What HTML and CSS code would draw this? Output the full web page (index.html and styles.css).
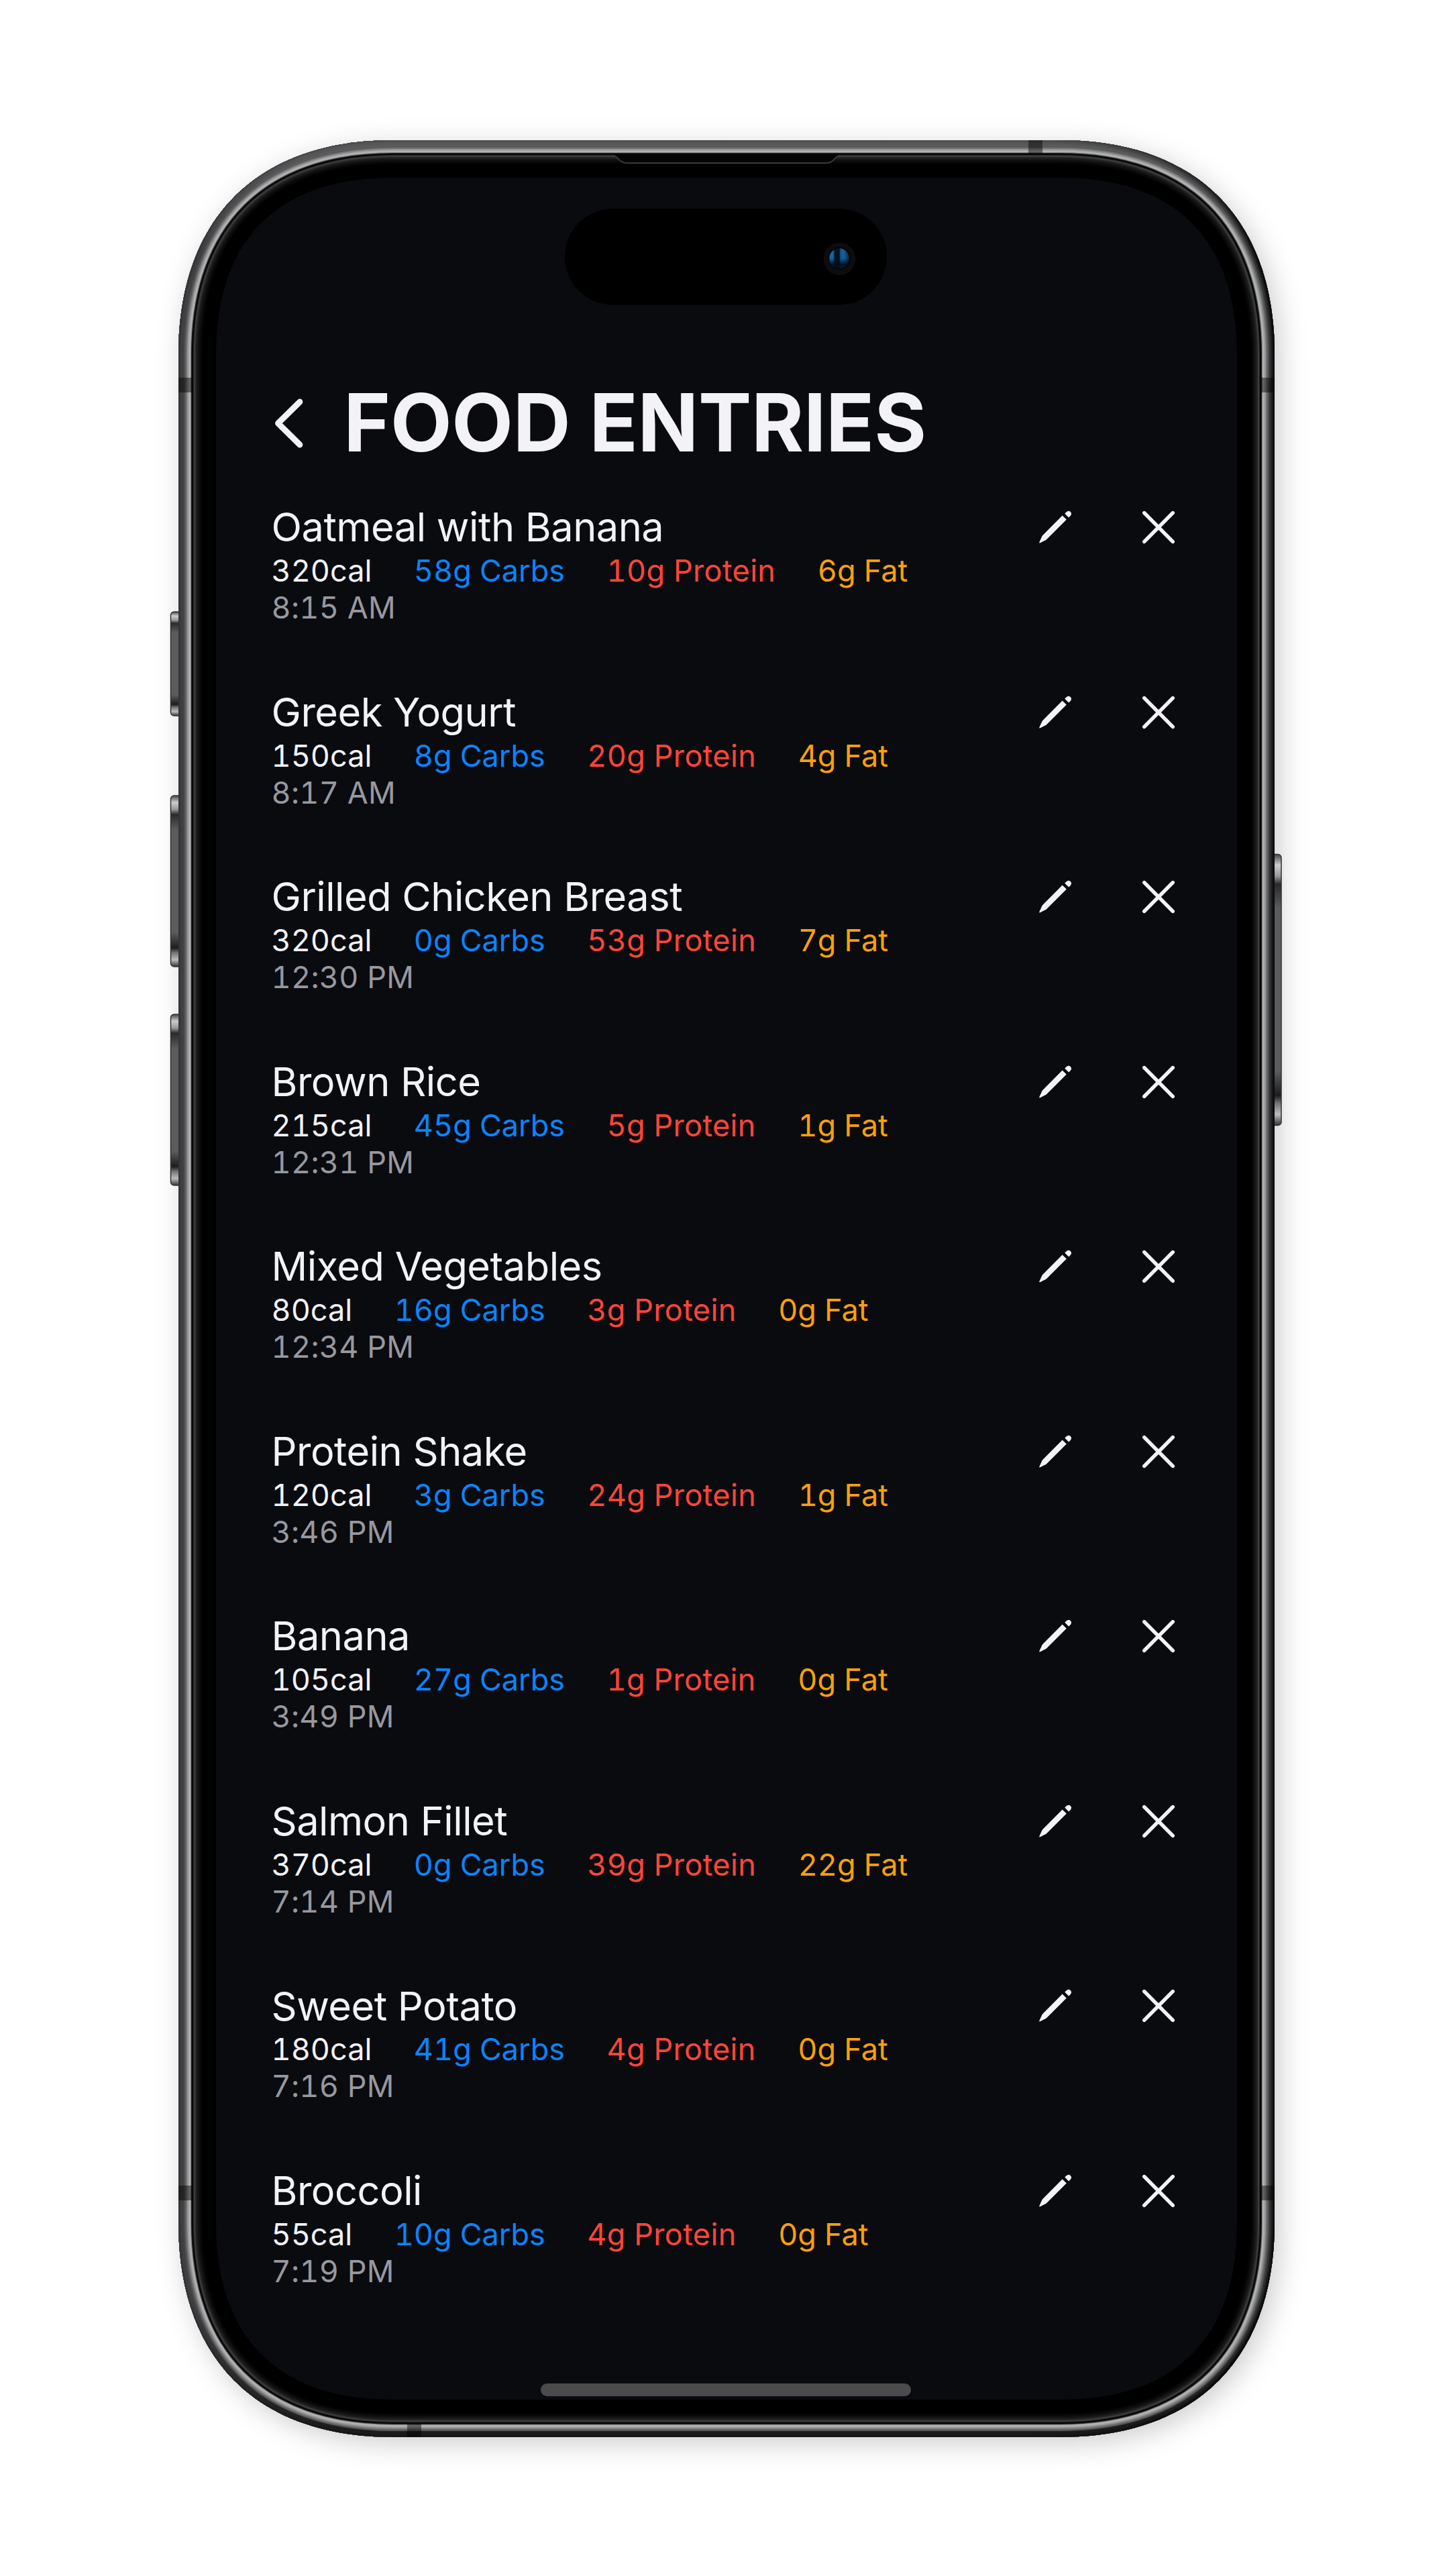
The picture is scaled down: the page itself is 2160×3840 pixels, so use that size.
FILE: index.html
```html
<!DOCTYPE html>
<html lang="en">
<head>
<meta charset="utf-8">
<title>Food Entries</title>
<link rel="stylesheet" href="styles.css">
</head>
<body>
<svg class="defs" aria-hidden="true">
  <symbol id="icon-pencil" viewBox="0 0 50 50"><path d="M35.6 7.6 41.8 13.4 12.8 42.5Q11.3 44 9 45L2.6 48.2Q.7 48.9 1.4 47L4.4 40.4Q5.2 38.2 6.8 36.6Z"/><path d="M39.2 4.6 42.3 1.7Q45.2-.4 47.7 1.9Q50.2 4.6 48.1 7.4L45.1 10.4Z"/></symbol>
  <symbol id="icon-close" viewBox="0 0 50 50"><path d="M3.8 3.6 46.2 46.4M46.2 3.6 3.8 46.4" fill="none" stroke="currentColor" stroke-width="5.6" stroke-linecap="round"/></symbol>
</svg>
<main class="device">
  <svg class="frame" viewBox="0 0 1634 3424" aria-hidden="true">
    <defs>
      <path id="body" d="M320 0H1314C1517 0 1634 117 1634 320V3104C1634 3307 1517 3424 1314 3424H320C117 3424 0 3307 0 3104V320C0 117 117 0 320 0Z"/>
      <clipPath id="clip"><use href="#body"/></clipPath>
      <linearGradient id="m0" gradientUnits="userSpaceOnUse" x1="0" y1="0" x2="1634" y2="0"><stop offset=".78" stop-color="#343436"/><stop offset=".97" stop-color="#0b0b0c"/></linearGradient>
      <linearGradient id="m1" gradientUnits="userSpaceOnUse" x1="0" y1="0" x2="1634" y2="0"><stop offset=".78" stop-color="#3e3e40"/><stop offset=".97" stop-color="#1b1b1c"/></linearGradient>
      <linearGradient id="m2" gradientUnits="userSpaceOnUse" x1="0" y1="0" x2="1634" y2="0"><stop offset=".78" stop-color="#404042"/><stop offset=".97" stop-color="#303132"/></linearGradient>
      <linearGradient id="m3" gradientUnits="userSpaceOnUse" x1="0" y1="0" x2="0" y2="3424"><stop offset="0" stop-color="#fff" stop-opacity=".13"/><stop offset=".05" stop-color="#fff" stop-opacity="0"/><stop offset=".94" stop-color="#000" stop-opacity="0"/><stop offset="1" stop-color="#000" stop-opacity=".6"/></linearGradient>
      <linearGradient id="key" x1="0" y1="0" x2="0" y2="1"><stop offset="0" stop-color="#444"/><stop offset=".04" stop-color="#ccc"/><stop offset=".08" stop-color="#999"/><stop offset=".11" stop-color="#2a2a2b"/><stop offset=".2" stop-color="#5b5c5d"/><stop offset=".8" stop-color="#5b5c5d"/><stop offset=".89" stop-color="#1c1c1d"/><stop offset=".92" stop-color="#777"/><stop offset=".96" stop-color="#bbb"/><stop offset="1" stop-color="#333"/></linearGradient>
      <linearGradient id="lens" x1="0" y1="0" x2="1" y2="0"><stop offset="0" stop-color="#10609f"/><stop offset=".2" stop-color="#1a659f"/><stop offset=".27" stop-color="#041426"/><stop offset=".5" stop-color="#041426"/><stop offset=".58" stop-color="#155a94"/><stop offset=".75" stop-color="#145c98"/><stop offset="1" stop-color="#062744"/></linearGradient>
      <linearGradient id="lens-shade" x1="0" y1="0" x2="0" y2="1"><stop offset=".5" stop-color="#030d1c" stop-opacity="0"/><stop offset=".8" stop-color="#030d1c" stop-opacity=".9"/></linearGradient>
    </defs>
    <use class="shadow" href="#body"/>
    <g fill="url(#key)" stroke="#333" stroke-width="1.5">
      <rect x="-11.5" y="703" width="20" height="155" rx="5"/>
      <rect x="-11.5" y="977" width="20" height="255" rx="5"/>
      <rect x="-11.5" y="1303" width="20" height="255" rx="5"/>
      <rect x="1624" y="1064.5" width="20" height="404" rx="5"/>
    </g>
    <g clip-path="url(#clip)">
      <use href="#body" fill="#0a0b0f"/>
      <g fill="none">
        <use href="#body" stroke="#000" stroke-width="112"/>
        <use href="#body" stroke="#030303" stroke-width="72"/>
        <use href="#body" stroke="#080808" stroke-width="68"/>
        <use href="#body" stroke="#0e0e0e" stroke-width="64"/>
        <use href="#body" stroke="#151515" stroke-width="60"/>
        <use href="#body" stroke="#1d1d1d" stroke-width="56"/>
        <use href="#body" stroke="#262626" stroke-width="53"/>
        <use href="#body" stroke="#3a3b3b" stroke-width="50"/>
        <use href="#body" stroke="#262727" stroke-width="46"/>
        <use href="#body" stroke="#060707" stroke-width="44"/>
        <use href="#body" stroke="#232424" stroke-width="40"/>
        <use href="#body" stroke="#7e7e7e" stroke-width="38"/>
        <use href="#body" stroke="#b2b2b2" stroke-width="36"/>
        <use href="#body" stroke="#a6a6a6" stroke-width="32"/>
        <use href="#body" stroke="#909091" stroke-width="29"/>
        <use href="#body" stroke="#78787a" stroke-width="26"/>
        <use href="#body" stroke="#606163" stroke-width="23"/>
        <use href="#body" stroke="#4e4f51" stroke-width="20"/>
        <use href="#body" stroke="url(#m2)" stroke-width="16"/>
        <use href="#body" stroke="url(#m1)" stroke-width="10"/>
        <use href="#body" stroke="url(#m0)" stroke-width="5"/>
        <use href="#body" stroke="url(#m3)" stroke-width="18"/>
      </g>
      <path fill="#000" fill-opacity=".45" d="M0 354H20V376H0ZM1614 354H1634V376H1614ZM0 3049H20V3071H0ZM1614 3049H1634V3071H1614ZM1267 0H1288V20H1267ZM341 3404H362V3424H341Z"/>
      <path fill="#050505" d="M650 23C656 23 656 34 668 34H966C978 34 978 23 984 23V20H650Z"/>
      <path fill="none" stroke="#383939" stroke-width="2" d="M648 23C656 23 656 34 668 34H966C978 34 978 23 986 23"/>
    </g>
    <rect x="576" y="102" width="480" height="143.5" rx="71.7" fill="#000"/>
    <circle cx="985.4" cy="177" r="24" fill="#0d0d0e"/>
    <circle cx="985" cy="176" r="17" fill="#050506"/>
    <circle cx="985" cy="176" r="14.8" fill="url(#lens)"/>
    <circle cx="985" cy="176" r="14.8" fill="url(#lens-shade)"/>
  </svg>
  <section class="screen">
    <header class="header">
      <svg class="back" viewBox="0 0 48 80"><path d="M42 8 9.5 40 42 72" fill="none" stroke="currentColor" stroke-width="8.8" stroke-linecap="round" stroke-linejoin="round"/></svg>
      <h1 class="title">FOOD ENTRIES</h1>
    </header>
    <ul class="entries" id="entries"></ul>
    <div class="home-indicator"></div>
  </section>
</main>
<script src="entries.js"></script>
</body>
</html>
```
FILE: entries.js
```js
const entries = [
  ["Oatmeal with Banana", 320, 58, 10, 6, "8:15 AM"],
  ["Greek Yogurt", 150, 8, 20, 4, "8:17 AM"],
  ["Grilled Chicken Breast", 320, 0, 53, 7, "12:30 PM"],
  ["Brown Rice", 215, 45, 5, 1, "12:31 PM"],
  ["Mixed Vegetables", 80, 16, 3, 0, "12:34 PM"],
  ["Protein Shake", 120, 3, 24, 1, "3:46 PM"],
  ["Banana", 105, 27, 1, 0, "3:49 PM"],
  ["Salmon Fillet", 370, 0, 39, 22, "7:14 PM"],
  ["Sweet Potato", 180, 41, 4, 0, "7:16 PM"],
  ["Broccoli", 55, 10, 4, 0, "7:19 PM"],
];

document.getElementById("entries").innerHTML = entries
  .map(([name, cal, carbs, protein, fat, time]) => `
    <li class="entry">
      <div class="details">
        <h2 class="name">${name}</h2>
        <div class="macros">
          <span class="cal">${cal}cal</span>
          <span class="carbs">${carbs}g Carbs</span>
          <span class="protein">${protein}g Protein</span>
          <span class="fat">${fat}g Fat</span>
        </div>
        <div class="time">${time}</div>
      </div>
      <div class="actions">
        <svg class="icon"><use href="#icon-pencil"/></svg>
        <svg class="icon"><use href="#icon-close"/></svg>
      </div>
    </li>`)
  .join("");
```
FILE: styles.css
```css
* { box-sizing: border-box; }

body {
  margin: 0;
  width: 2160px;
  height: 3840px;
  padding: 209px 0 0 266px;
  overflow: hidden;
  background: #fff;
  font-family: Inter, "Liberation Sans", sans-serif;
  color: #f2f2f7;
}

.defs { position: absolute; width: 0; height: 0; }

.device { position: relative; width: 1634px; height: 3424px; }

.frame { position: absolute; inset: 0; width: 1634px; height: 3424px; overflow: visible; }

.shadow { fill: #222; filter: drop-shadow(8px 9px 20px rgba(0, 0, 0, 0.2)); }

.screen {
  position: relative;
  display: flex;
  flex-direction: column;
  height: 3424px;
  padding: 348.7px 148px 0 138.5px;
}

.header { display: flex; align-items: center; height: 144px; }

.back { width: 48px; height: 80px; margin: 3px 59.8px 0 0; }

.title {
  margin: 0;
  font-size: 119px;
  font-weight: 700;
  line-height: 144px;
  letter-spacing: -0.25px;
  white-space: nowrap;
}

.entries {
  display: flex;
  flex-direction: column;
  gap: 90.66px;
  margin: 47.5px 0 0;
  padding: 0;
  list-style: none;
}

.entry { display: flex; justify-content: space-between; }

.name {
  margin: 0;
  font-size: 59.5px;
  font-weight: 400;
  line-height: 73.8px;
  letter-spacing: -0.5px;
}

.macros {
  display: flex;
  gap: 62.5px;
  font-size: 45px;
  line-height: 55.1px;
  font-variant-numeric: tabular-nums;
  white-space: nowrap;
}

.carbs { color: #0a84ff; }
.protein { color: #ff453a; letter-spacing: 0.35px; }
.fat { color: #ff9f0a; }

.time {
  color: #98989f;
  font-size: 45px;
  line-height: 56px;
  letter-spacing: 0.3px;
  font-variant-numeric: tabular-nums;
}

.actions { display: flex; align-items: center; gap: 104.5px; height: 73.8px; }

.icon { width: 50px; height: 50px; fill: currentColor; }

.home-indicator {
  position: absolute;
  left: 540px;
  bottom: 61px;
  width: 552px;
  height: 19px;
  border-radius: 10px;
  background: #4b4b4b;
}
```
